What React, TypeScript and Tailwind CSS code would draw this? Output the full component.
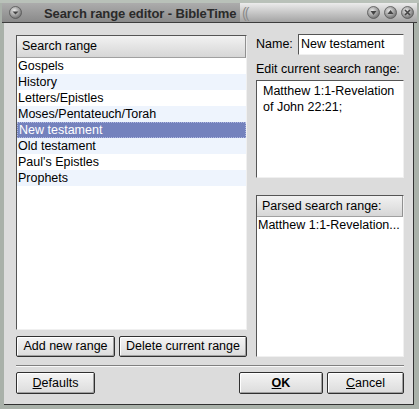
import React from "react";

const rows = [
  "Gospels",
  "History",
  "Letters/Epistles",
  "Moses/Pentateuch/Torah",
  "New testament",
  "Old testament",
  "Paul's Epistles",
  "Prophets",
];

function Btn({ children, className = "" }: { children: React.ReactNode; className?: string }) {
  return (
    <div
      className={
        "flex items-center justify-center border border-[#303030] rounded-[2px] bg-gradient-to-b from-[#f4f4f4] to-[#dcdcdc] shadow-[inset_1px_1px_0_#ffffff,inset_-1px_-1px_0_#a0a0a0] text-[12.5px] text-black " +
        className
      }
    >
      {children}
    </div>
  );
}

function TitleBtn({ kind }: { kind: "min" | "max" | "close" | "menu" }) {
  return (
    <svg width="13" height="13" viewBox="0 0 13 13">
      <defs>
        <radialGradient id={"g" + kind} cx="40%" cy="35%" r="70%">
          <stop offset="0%" stopColor="#e8e8e8" />
          <stop offset="100%" stopColor="#6a6a6a" />
        </radialGradient>
      </defs>
      <circle cx="6.5" cy="6.5" r="6" fill={"url(#g" + kind + ")"} stroke="#555" strokeWidth="0.8" />
      {kind === "min" && <path d="M3.5 5 L9.5 5 L6.5 9 Z" fill="#444" />}
      {kind === "max" && <path d="M3.5 8 L9.5 8 L6.5 4 Z" fill="#444" />}
      {kind === "close" && <path d="M4 4 L9 9 M9 4 L4 9" stroke="#444" strokeWidth="1.6" />}
      {kind === "menu" && <path d="M3.5 5.5 L9.5 5.5 L6.5 8.5 Z" fill="#444" />}
    </svg>
  );
}

export default function App() {
  return (
    <div
      className="w-[419px] h-[409px] bg-[#a9b1a9] flex flex-col overflow-hidden"
      style={{ fontFamily: '"Liberation Sans", Arial, sans-serif' }}
    >
      {/* Title bar */}
      <div className="h-[3px] bg-[#b9c1b9]" />
      <div className="h-[20px] mx-[2px] flex items-center bg-gradient-to-b from-[#acacac] to-[#8a8a8a] border-b border-[#3c3c3c]">
        <div className="w-[26px] flex justify-center">
          <TitleBtn kind="menu" />
        </div>
        <div className="flex-1 pl-[16px]">
          <span className="text-[13px] font-bold text-[#2a2a2a] tracking-[-0.1px] whitespace-nowrap">
            Search range editor - BibleTime
          </span>
        </div>
        <div className="w-[177px] h-full flex items-center bg-gradient-to-b from-[#ececec] to-[#a4a4a4] pl-[2px]">
          <span className="text-[#8a8a8a] text-[14px] leading-none tracking-[-2px]">((</span>
          <div className="flex-1" />
          <div className="flex gap-[4px] pr-[3px]">
            <TitleBtn kind="min" />
            <TitleBtn kind="max" />
            <TitleBtn kind="close" />
          </div>
        </div>
      </div>

      {/* Body */}
      <div className="flex-1 ml-[4px] mr-[5px] mb-[4px] bg-[#dcdcdc] border-r border-b border-[#303030] flex flex-col pl-[12px] pr-[9px] pt-[12px]">
        <div className="flex gap-[9px] h-[322px]">
          {/* Left column */}
          <div className="w-[231px] flex flex-col">
            <div className="h-[296px] border border-[#555] border-r-[#f0f0f0] border-b-[#f0f0f0] bg-white flex flex-col">
              <div className="h-[22px] flex items-center pl-[5px] bg-gradient-to-b from-[#f2f2f2] to-[#d6d6d6] border-b border-[#a0a0a0] border-r border-r-[#909090] text-[12.5px] text-black">
                Search range
              </div>
              {rows.map((r, i) => (
                <div
                  key={r}
                  className={
                    "h-[16px] flex items-center pl-[1px] text-[12.5px] " +
                    (r === "New testament"
                      ? "bg-[#7482bd] text-white border border-dotted border-[#b0b8e0]"
                      : i % 2 === 1
                      ? "bg-[#eef4fd] text-black"
                      : "bg-white text-black")
                  }
                >
                  {r}
                </div>
              ))}
            </div>
            <div className="flex gap-[4px] mt-[6px]">
              <Btn className="w-[99px] h-[21px]">Add new range</Btn>
              <Btn className="w-[128px] h-[21px]">Delete current range</Btn>
            </div>
          </div>

          {/* Right column */}
          <div className="w-[148px] flex flex-col">
            <div className="flex items-center h-[21px] mt-[-1px]">
              <span className="text-[12.5px] text-black w-[42px]">Name:</span>
              <div className="flex-1 h-[21px] bg-white border border-[#555] border-r-[#f0f0f0] border-b-[#f0f0f0] flex items-center pl-[2px] text-[12.5px] text-black">
                New testament
              </div>
            </div>
            <div className="text-[12.5px] text-black mt-[7px] leading-[14px]">
              Edit current search range:
            </div>
            <div className="mt-[4px] h-[99px] bg-white border border-[#555] border-r-[#f0f0f0] border-b-[#f0f0f0] pl-[6px] pr-[4px] pt-[2px] text-[12.5px] leading-[16px] text-black">
              Matthew 1:1-Revelation of John 22:21;
            </div>
            <div className="mt-[17px] h-[164px] bg-white border border-[#555] border-r-[#f0f0f0] border-b-[#f0f0f0] flex flex-col">
              <div className="h-[21px] flex items-center pl-[5px] bg-gradient-to-b from-[#f2f2f2] to-[#d6d6d6] border-b border-[#a0a0a0] border-r border-r-[#909090] text-[12.5px] text-black">
                Parsed search range:
              </div>
              <div className="h-[16px] flex items-center pl-[1px] text-[12.5px] text-black whitespace-nowrap overflow-hidden">
                Matthew 1:1-Revelation...
              </div>
            </div>
          </div>
        </div>

        <div className="mt-[8px] h-[2px] border-t border-[#808080] border-b border-b-[#f8f8f8]" />

        <div className="flex mt-[5px]">
          <Btn className="w-[79px] h-[22px]">
            <span>
              <span className="underline">D</span>efaults
            </span>
          </Btn>
          <div className="flex-1" />
          <Btn className="w-[84px] h-[22px] mr-[4px]">
            <span className="font-bold">
              <span className="underline">O</span>K
            </span>
          </Btn>
          <Btn className="w-[77px] h-[22px]">
            <span>
              <span className="underline">C</span>ancel
            </span>
          </Btn>
        </div>
      </div>
    </div>
  );
}
